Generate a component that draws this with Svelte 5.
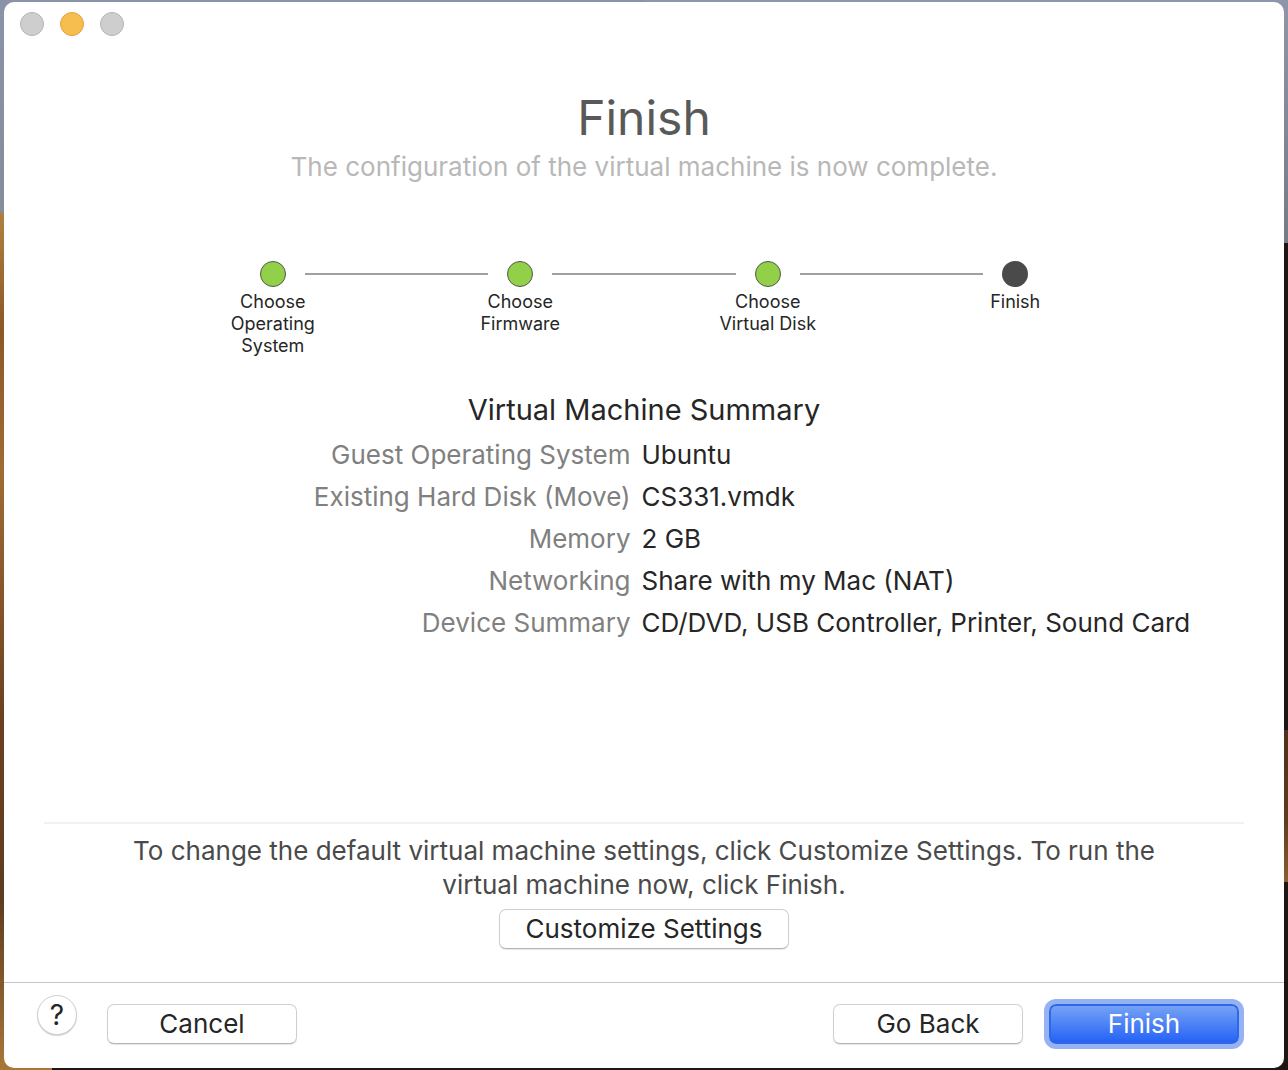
<script>
  const steps = [
    { lines: ['Choose', 'Operating', 'System'], done: true },
    { lines: ['Choose', 'Firmware'], done: true },
    { lines: ['Choose', 'Virtual Disk'], done: true },
    { lines: ['Finish'], done: false }
  ];
  const summary = [
    ['Guest Operating System', 'Ubuntu'],
    ['Existing Hard Disk (Move)', 'CS331.vmdk'],
    ['Memory', '2 GB'],
    ['Networking', 'Share with my Mac (NAT)'],
    ['Device Summary', 'CD/DVD, USB Controller, Printer, Sound Card']
  ];
</script>

<div class="desktop">
  <main class="window">
    <div class="lights">
      <button class="light" aria-label="Close"></button>
      <button class="light amber" aria-label="Minimize"></button>
      <button class="light" aria-label="Zoom"></button>
    </div>
    <header>
      <h1>Finish</h1>
      <p>The configuration of the virtual machine is now complete.</p>
    </header>
    <ol class="steps">
      {#each steps as step, i}
        {#if i > 0}<li class="line" aria-hidden="true"></li>{/if}
        <li class="step">
          <span class="dot" class:done={step.done}></span>
          <span class="label">{#each step.lines as line}<span>{line}</span>{/each}</span>
        </li>
      {/each}
    </ol>
    <section class="summary">
      <h2>Virtual Machine Summary</h2>
      <dl>
        {#each summary as [name, value]}
          <dt>{name}</dt>
          <dd>{value}</dd>
        {/each}
      </dl>
    </section>
    <section class="hint">
      <p>To change the default virtual machine settings, click Customize Settings. To run the virtual machine now, click Finish.</p>
      <button class="push wide">Customize Settings</button>
    </section>
    <footer>
      <button class="help" aria-label="Help">?</button>
      <button class="push">Cancel</button>
      <span class="space"></span>
      <button class="push">Go Back</button>
      <button class="push primary">Finish</button>
    </footer>
  </main>
</div>

<style>
  :global(body) {
    font-family: Inter, 'Liberation Sans', sans-serif;
    color: #262626;
  }
  .desktop {
    box-sizing: border-box;
    min-height: 100vh;
    padding: 2px 4px;
    display: flex;
    /* wallpaper: sky above, desert dune on the left, shadowed slope on the right */
    background:
      linear-gradient(#8f96ab, #737b88) 100% 0 / 50% 243px no-repeat,
      linear-gradient(#4f3019, #5f3c1e 60%, #8a5e30) 100% 730px / 4px 152px no-repeat,
      linear-gradient(#1f1513, #1f1513) 100% 100% / 96% 2px no-repeat,
      linear-gradient(90deg, transparent 50%, #1f1513 50%),
      linear-gradient(#8b93a8 0, #858c9a 212px, #b08040 213px, #8c5826 330px, #a06c34 470px, #6b4020 720px, #5f3c20 900px, #a87838 100%);
  }
  .window {
    flex: 1;
    min-width: 0;
    display: flex;
    flex-direction: column;
    background: #fff;
    border-radius: 10px;
    overflow: hidden;
  }
  button {
    font: inherit;
    color: inherit;
    padding: 0;
  }
  h1, h2, p, ol, dl, dd { margin: 0; padding: 0; }
  .lights {
    display: flex;
    gap: 16px;
    padding: 10px 16px 0;
  }
  .light {
    width: 24px;
    height: 24px;
    border-radius: 50%;
    border: 1px solid #b4b4b4;
    background: #cecece;
  }
  .amber { background: #f6be4f; border-color: #d8a344; }
  header { text-align: center; padding-top: 50px; }
  h1 {
    font-size: 48px;
    line-height: 64px;
    font-weight: 400;
    color: #595959;
  }
  header p {
    font-size: 26px;
    line-height: 34px;
    color: #b8b8b8;
  }
  .steps {
    list-style: none;
    display: flex;
    align-items: flex-start;
    width: 63%;
    margin: 77px auto 0;
  }
  .step {
    flex: none;
    width: 64px;
    display: flex;
    flex-direction: column;
    align-items: center;
    gap: 4px;
  }
  .line {
    flex: 1;
    height: 2px;
    margin-top: 12px;
    background: #a0a0a0;
  }
  .dot {
    box-sizing: border-box;
    width: 26px;
    height: 26px;
    border-radius: 50%;
    background: #4a4a4a;
  }
  .done { background: #92d04a; border: 1px solid #4f5a48; }
  .label {
    font-size: 18px;
    line-height: 22px;
    text-align: center;
    white-space: nowrap;
  }
  .label span { display: block; }
  .summary { padding-top: 35px; }
  h2 {
    font-size: 29px;
    line-height: 36px;
    font-weight: 400;
    text-align: center;
  }
  dl {
    display: grid;
    grid-template-columns: 1fr 1fr;
    column-gap: 11px;
    padding: 6px 16px 0 0;
    font-size: 26px;
    line-height: 42px;
  }
  dt { text-align: right; color: #808080; }
  .hint {
    margin: auto 40px 0;
    padding: 10px 80px 33px;
    border-top: 2px solid #f2f2f2;
    display: flex;
    flex-direction: column;
    align-items: center;
    gap: 7px;
  }
  .hint p {
    font-size: 26px;
    line-height: 34px;
    color: #4a4a4a;
    text-align: center;
  }
  .push {
    box-sizing: border-box;
    width: 190px;
    height: 40px;
    font-size: 26px;
    line-height: 38px;
    border: 1px solid #cfcfcf;
    border-bottom-color: #b4b4b4;
    border-radius: 7px;
    background: #fff;
    box-shadow: 0 1px 1px #0000001a;
  }
  .wide { width: 290px; }
  footer {
    display: flex;
    gap: 30px;
    padding: 21px 45px 24px 33px;
    border-top: 1px solid #c4c4c4;
  }
  .help {
    box-sizing: border-box;
    width: 40px;
    height: 40px;
    margin-top: -9px;
    border: 1px solid #d0d0d0;
    border-radius: 50%;
    background: #fff;
    font-size: 28px;
    box-shadow: 0 1px 1px #0000002e;
  }
  .space { flex: 1; }
  .primary {
    margin-left: -4px;
    color: #fff;
    border: 2px solid #2f68e4;
    line-height: 36px;
    background: linear-gradient(#75a2f5, #2563f6);
    box-shadow: 0 0 0 5px #95b2f4;
  }
</style>
